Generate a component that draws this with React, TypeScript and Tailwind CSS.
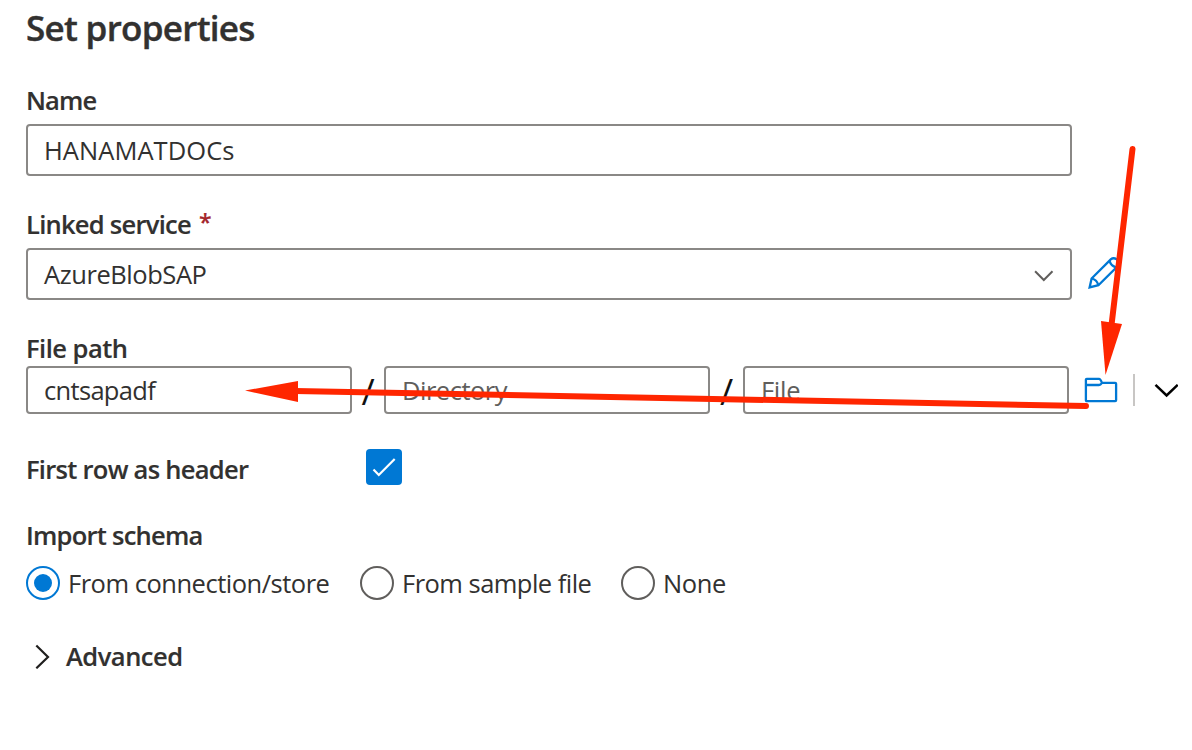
import type { ReactNode } from "react";

function Label({ children, className = "" }: { children: ReactNode; className?: string }) {
  return <div className={`h-8 whitespace-nowrap font-semibold leading-8 [-webkit-text-stroke:0.15px] ${className}`}>{children}</div>;
}

function Box({ children, className = "" }: { children: ReactNode; className?: string }) {
  return (
    <div className={`flex items-center rounded-[4px] border-2 border-[#8a8886] bg-white px-4 leading-8 ${className}`}>
      {children}
    </div>
  );
}

function Slash({ className = "" }: { className?: string }) {
  return <span className={`flex h-12 justify-center text-[36px] leading-[52px] text-[#111] ${className}`}>/</span>;
}

function Radio({ checked = false }: { checked?: boolean }) {
  return (
    <span
      className={`flex size-[34px] items-center justify-center rounded-full border-2 ${
        checked ? "border-[#0078d4]" : "border-[#605e5c]"
      }`}
    >
      {checked && <span className="size-[18px] rounded-full bg-[#0078d4]" />}
    </span>
  );
}

function PencilIcon() {
  return (
    <svg className="size-8" viewBox="0 0 32 32" fill="none" stroke="#0078d4" strokeWidth="2.3">
      <path d="M1.600 30.400 3.600 21.500 23 2.200Q25.500 .2 28.800 2.400 32 5.500 29.800 9L10.400 28.200Z" />
      <path d="M3.600 21.500Q9 22.800 10.400 28.200M21.500 3.800Q23 8.800 28.200 10.300" />
    </svg>
  );
}

function FolderIcon() {
  return (
    <svg className="h-[26px] w-[34px]" viewBox="-1 -1 34 26" fill="none" stroke="#0078d4" strokeWidth="2.3" strokeLinejoin="round">
      <path d="M.9 7V1.800Q.9 .9 1.800 .9H14Q15.500 .9 17 4.900H30.200Q31.100 4.900 31.100 5.800V22.200Q31.100 23.100 30.200 23.100H1.800Q.9 23.100 .9 22.200V7H14Q15.500 7 17 4.900" />
    </svg>
  );
}

export default function App() {
  return (
    <div className="relative flex h-[750px] w-[1192px] flex-col overflow-hidden bg-white pl-[26px] pt-2 font-['Open_Sans',sans-serif] text-[25.5px] text-[#323130]">
      <h1 className="h-10 whitespace-nowrap text-[35px] font-semibold leading-10 tracking-[-0.7px] [-webkit-text-stroke:0.4px]">
        Set properties
      </h1>

      <Label className="mt-9 tracking-[-0.9px]">Name</Label>
      <Box className="mt-2 h-[52px] w-[1046px]">
        <span className="tracking-[0.05px]">HANAMATDOCs</span>
      </Box>

      <Label className="mt-8 flex tracking-[-0.73px]">
        Linked service
        <span className="-mt-0.5 ml-2 text-[23px] text-[#a4262c]">*</span>
      </Label>
      <div className="mt-2 flex items-center">
        <Box className="h-[52px] w-[1046px] justify-between">
          <span className="tracking-[-0.44px]">AzureBlobSAP</span>
          <svg className="mt-1 h-3 w-5" viewBox="0 0 20 12" fill="none" stroke="#605e5c" strokeWidth="2">
            <path d="M1.100 1.300 9.800 10 18.500 1.300" />
          </svg>
        </Box>
        <button className="ml-4 -mt-0.5" aria-label="Edit">
          <PencilIcon />
        </button>
      </div>

      <Label className="mt-8 tracking-[-0.5px]">File path</Label>
      <div className="mt-0.5 flex h-12 items-center">
        <Box className="h-12 w-[326px]">
          <span className="tracking-[-0.68px]">cntsapadf</span>
        </Box>
        <Slash className="w-8" />
        <Box className="h-12 w-[326px] text-[#605e5c]">
          <span className="tracking-[-0.5px]">Directory</span>
        </Box>
        <Slash className="w-[33px]" />
        <Box className="h-12 w-[326px] text-[#605e5c]">
          <span className="tracking-[-0.3px]">File</span>
        </Box>
        <button className="ml-[15px]" aria-label="Browse">
          <FolderIcon />
        </button>
        <span className="ml-[15px] h-8 w-0.5 bg-[#c8c6c4]" />
        <svg className="ml-[19px] h-4 w-6" viewBox="0 0 24 16" fill="none" stroke="#000" strokeWidth="2.500">
          <path d="M1.500 2.800 12.600 13.500 23.700 2.800" />
        </svg>
      </div>

      <div className="mt-[35px] flex h-9">
        <Label className="mt-1 w-[340px] tracking-[-0.72px]">First row as header</Label>
        <span className="flex size-9 items-center justify-center rounded-[4px] bg-[#0078d4]">
          <svg className="h-5 w-6" viewBox="0 0 24 20" fill="none" stroke="#fff" strokeWidth="2.200">
            <path d="M1.500 12.500 6.800 18 22.700 2" />
          </svg>
        </span>
      </div>

      <Label className="mt-[34px] tracking-[-0.75px]">Import schema</Label>
      <div className="mt-[15px] flex h-[34px] items-center leading-8">
        <Radio checked />
        <span className="ml-2 w-[292px] whitespace-nowrap tracking-[-0.49px]">From connection/store</span>
        <Radio />
        <span className="ml-2 w-[219px] whitespace-nowrap tracking-[-0.53px]">From sample file</span>
        <Radio />
        <span className="ml-2 tracking-[-0.4px]">None</span>
      </div>

      <div className="mt-10 flex h-8 items-center">
        <svg className="ml-2 h-[26px] w-4" viewBox="0 0 16 26" fill="none" stroke="#201f1e" strokeWidth="2.200">
          <path d="M2.300 2.500 14 14 2.300 25.300" />
        </svg>
        <Label className="ml-4 tracking-[-0.5px]">Advanced</Label>
      </div>

      <svg className="pointer-events-none absolute inset-0 h-[750px] w-[1192px]" viewBox="0 0 1192 750">
        <g stroke="#ff2600" strokeWidth="6" strokeLinecap="round">
          <path d="M1132.500 149 1111.500 325" />
          <path d="M1086 406 295 391" />
        </g>
        <g fill="#ff2600">
          <path d="M1101 321 1122 324 1105.500 375Z" />
          <path d="M298 381 298 402 245 390.500Z" />
        </g>
      </svg>
    </div>
  );
}
